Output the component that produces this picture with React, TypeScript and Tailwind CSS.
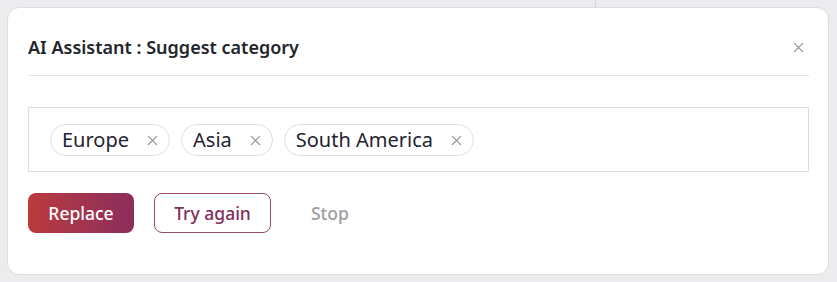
import React from "react";

function XIcon({ className }: { className?: string }) {
  return (
    <svg viewBox="0 0 12 12" className={className} fill="none" stroke="currentColor" strokeWidth="1.2" strokeLinecap="round">
      <path d="M1.5 1.5L10.5 10.5M10.5 1.5L1.5 10.5" />
    </svg>
  );
}

function Chip({ label }: { label: string }) {
  return (
    <div className="flex items-center h-[32px] rounded-full border border-[#dedfe3] pl-[11px] pr-[11px] bg-white">
      <span className="text-[20px] leading-none text-[#1f2430]">{label}</span>
      <XIcon className="w-[11px] h-[11px] ml-[18px] text-[#8a8d94]" />
    </div>
  );
}

export default function App() {
  return (
    <div
      className="w-[837px] h-[282px] bg-[#ececee] pt-[7px] pl-[7px] pr-[8px] pb-[7px] relative"
      style={{ fontFamily: '"Noto Sans", "Open Sans", sans-serif' }}
    >
      <div className="absolute top-0 left-[595px] w-px h-[7px] bg-[#d6d6d9]" />
      <div className="h-full bg-white rounded-[12px] border border-[#dcdcdf] pl-[20px] pr-[19px] flex flex-col">
        <div className="flex items-center justify-between pt-[28px] pb-[17px] border-b border-[#e3e3e6]">
          <h1 className="text-[18px] leading-[22px] font-semibold text-[#22252b]">AI Assistant : Suggest category</h1>
          <XIcon className="w-[11px] h-[11px] mr-[5px] text-[#8a8d94]" />
        </div>
        <div className="mt-[31px] h-[65px] border border-[#dcdde1] pt-[16px] pl-[21px] flex gap-[11px]">
          <Chip label="Europe" />
          <Chip label="Asia" />
          <Chip label="South America" />
        </div>
        <div className="mt-[21px] flex items-center gap-[20px]">
          <button className="h-[40px] w-[106px] rounded-[8px] bg-gradient-to-r from-[#bb3a3c] to-[#8b2d5c] text-white text-[17.5px] font-medium">
            Replace
          </button>
          <button className="h-[40px] w-[117px] rounded-[8px] border-[1.5px] border-[#9a4a6e] text-[#7e2f58] text-[17.5px] font-medium">
            Try again
          </button>
          <button className="h-[40px] px-[20px] text-[#9d9ea3] text-[17.5px] font-medium">Stop</button>
        </div>
      </div>
    </div>
  );
}
